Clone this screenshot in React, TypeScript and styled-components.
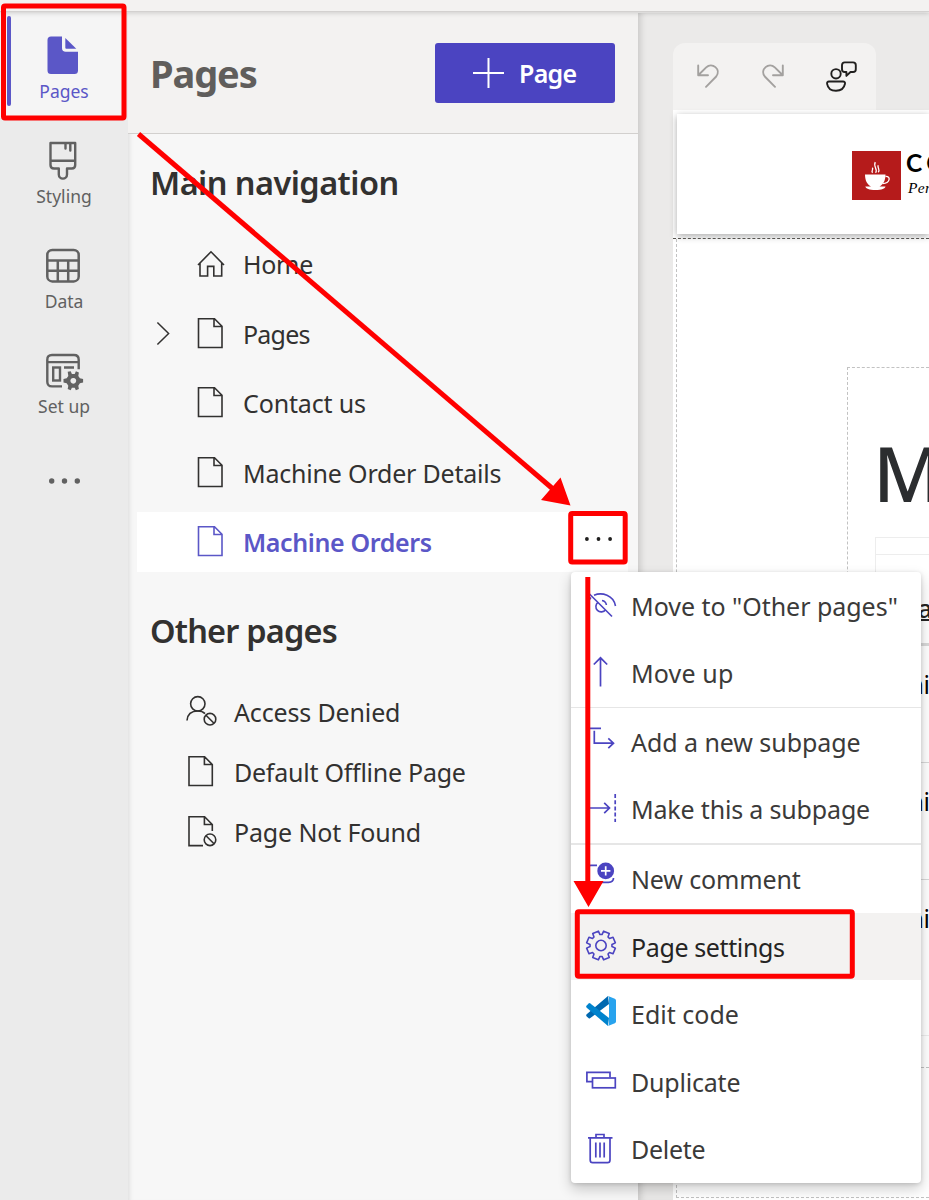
import React from 'react';
import styled, { createGlobalStyle, css } from 'styled-components';

const Global = createGlobalStyle`
  * { box-sizing: border-box; }
  body { margin: 0; overflow: hidden; font-family: "Noto Sans", "Open Sans", sans-serif; color: #323130; }
  svg { display: block; flex: none; overflow: visible; }
`;

const Screen = styled.div`
  position: relative; width: 929px; height: 1200px; overflow: hidden;
  display: flex; flex-direction: column; background: #f3f2f1;
`;
const TopBar = styled.div`
  height: 12px; margin-bottom: 1px; flex: none; background: #f3f2f1; border-bottom: 1px solid #d3d1d0;
  box-shadow: 0 1px 5px rgba(0,0,0,.16); position: relative; z-index: 1;
`;
const Body = styled.div`
  flex: 1; min-height: 0; display: grid; grid-template-columns: 128px 510px 291px;
`;

const Rail = styled.nav`
  background: #ebebeb; display: flex; flex-direction: column; align-items: stretch;
`;
const RailItem = styled.div<{ $active?: boolean }>`
  height: 105px; display: flex; flex-direction: column; align-items: center; gap: 4px;
  padding-top: 22px; font-size: 17.5px; line-height: 24px; color: #616161;
  ${p => p.$active && css`
    background: #f5f5f5; color: #5b57c7; margin-right: 2px; padding-left: 2px;
  `}
`;
const RailIcon = styled.div`
  height: 40px; display: flex; align-items: center; justify-content: center; margin-right: 3px;
`;
const RailMore = styled.div`
  display: flex; justify-content: center; padding-top: 44px; color: #616161;
`;
const RailLabel = styled.span<{ $w: number }>`
  display: flex; justify-content: center; width: ${p => p.$w}px; white-space: nowrap;
`;
const ActiveMark = styled.div`
  position: absolute; left: 7px; top: 16px; width: 4px; height: 90px; border-radius: 2px; background: #5b57c7;
`;

const Panel = styled.section`
  background: #f7f7f7; box-shadow: inset 5px 0 5px -4px rgba(0,0,0,.12);
  display: flex; flex-direction: column;
`;
const PanelHeader = styled.header`
  height: 121px; background: #f3f2f1; border-bottom: 1px solid #d2d0ce; flex: none;
  display: flex; justify-content: space-between; align-items: flex-start; padding: 30px 23px 0 22px;
`;
const PanelTitle = styled.h1`
  margin: 2px 0 0; font-size: 38px; line-height: 56px; font-weight: 700; color: #605e5c; letter-spacing: -1.1px;
`;
const AddButton = styled.button`
  width: 180px; height: 60px; border: 0; border-radius: 3px; background: #4b44c1; color: #fff;
  font: 600 25px/60px "Noto Sans", sans-serif; letter-spacing: -.7px;
  display: flex; align-items: center; gap: 15px; padding: 0 0 0 38px;
`;
const AddLabel = styled.span`padding-bottom: 1px;`;
const SectionTitle = styled.h2<{ $top: number; $ls: number }>`
  margin: ${p => p.$top}px 0 0 22px; height: 50px; font-size: 32.5px; line-height: 50px; font-weight: 600;
  letter-spacing: ${p => p.$ls}px; white-space: nowrap;
`;
const NavList = styled.div`
  margin: 26px 10px 0 9px; display: flex; flex-direction: column; gap: 9.5px;
`;
const NavRow = styled.div<{ $selected?: boolean }>`
  height: 60px; display: grid; grid-template-columns: 60px 46px 1fr 60px; align-items: center;
  font-size: 25px; line-height: 60px; white-space: nowrap;
  ${p => p.$selected && css`background: #fff; color: #5b57c7; font-weight: 600;`}
`;
const ChevronCell = styled.div`display: flex; padding-left: 19px;`;
const MoreCell = styled.div`display: flex; justify-content: center; color: #201f1e; padding-bottom: 6px;`;
const OtherList = styled.div`
  margin: 26px 0 0 58px; display: flex; flex-direction: column;
`;
const OtherRow = styled.div`
  height: 60px; display: grid; grid-template-columns: 48px 1fr; align-items: center; font-size: 25px;
  line-height: 60px; white-space: nowrap;
`;
const Text = styled.span<{ $ls?: number }>`letter-spacing: ${p => p.$ls || 0}px;`;

const Canvas = styled.main`
  background: #ebeae9; box-shadow: inset 6px 0 7px -4px rgba(0,0,0,.16);
  padding: 30px 0 0 35px; display: flex; flex-direction: column; overflow: hidden;
`;
const Tools = styled.div`
  width: 203px; height: 67px; flex: none; background: #f3f2f1; border-radius: 12px 12px 0 0;
  display: flex; align-items: center; padding: 0 19px 1px 24px; justify-content: space-between; color: #a3a19f;
`;
const Site = styled.div`flex: 1; background: #fff; padding: 4px 0 0 0; display: flex; flex-direction: column; min-height: 0;`;
const SiteHeader = styled.div`
  height: 120px; margin-left: 4px; flex: none; background: #fff; box-shadow: 0 2px 7px rgba(0,0,0,.34);
  padding: 37px 0 0 175px; display: flex; gap: 5px; white-space: nowrap;
`;
const Logo = styled.div`
  width: 49px; height: 49px; background: #b51b1b; flex: none; display: flex; align-items: center; justify-content: center;
`;
const Brand = styled.div`
  color: #000; font: 700 24.5px/23px Lato, sans-serif; letter-spacing: 4.5px;
`;
const Tagline = styled.div`
  font: italic 400 15.5px/28px "Liberation Serif", serif; letter-spacing: .3px; padding-left: 2px;
`;
const Divider = styled.div`height: 5px; border-bottom: 1px dashed #55534f; flex: none; position: relative;`;
const SiteBody = styled.div`
  margin-left: 3px; height: 959px; flex: none; border: 1px dashed #c2c2c2; border-width: 0 0 1px 1px;
  padding: 128px 0 0 170px;
`;
const Block = styled.div`
  height: 701px; border: 1px dashed #c2c2c2; border-right: 0; padding: 59px 0 0 27px; overflow: hidden;
`;
const Heading = styled.div`
  margin-left: -2px; font-size: 76px; line-height: 92px; height: 110px; font-weight: 500; color: #2b2d2f; white-space: nowrap;
`;
const Table = styled.div`
  border: 1px solid #ededed; border-right: 0; height: 499px; font-size: 25px; color: #000; white-space: nowrap;
`;
const TableTop = styled.div`height: 17px; border-bottom: 1px solid #ededed;`;
const TableHead = styled.div`
  height: 91px; border-bottom: 3px solid #d9d9d9; padding: 36px 0 0 19px; line-height: 34px;
`;
const HeadText = styled.span`
  display: inline-block; color: #252423; height: 30px; border-bottom: 2px solid #252423; font-weight: 500;
`;
const TableRow = styled.div`
  height: 117px; border-bottom: 1px solid #d9d9d9; padding: 19px 0 0 17px; line-height: 38px; letter-spacing: -.4px;
  &:last-child { height: 156px; border-color: #ededed; }
`;

const Menu = styled.div`
  position: absolute; left: 571px; top: 572px; width: 350px; height: 611px; background: #fff; border-radius: 4px;
  box-shadow: 0 6px 14px rgba(0,0,0,.2), 0 1px 4px rgba(0,0,0,.14); z-index: 2;
`;
const MenuItem = styled.div<{ $hover?: boolean }>`
  height: 67.55px; display: grid; grid-template-columns: 60px 1fr; align-items: center; font-size: 25px;
  line-height: 65px; color: ${p => (p.$hover ? '#252423' : '#3b3a39')}; white-space: nowrap;
  background: ${p => (p.$hover ? '#f3f2f1' : 'transparent')};
`;
const MenuText = styled(Text)`padding-top: 1px;`;
const MenuIcon = styled.div`display: flex; justify-content: center; padding: 0 1px 3px 0; color: #4b44c1;`;
const MenuLine = styled.div<{ $h: number }>`height: ${p => p.$h}px; background: #e6e6e6;`;

const Annotations = styled.svg`position: absolute; left: 0; top: 0; z-index: 3; pointer-events: none;`;

const line = { fill: 'none', stroke: 'currentColor' } as const;

const FileIcon = () => (
  <svg width="26" height="32" viewBox="0 0 26 32" {...line} strokeWidth="1.6">
    <path d="M1.5 .8H17.5L25 8.3V29.5H1.5ZM17 1V8.5H24.8" />
  </svg>
);
const HomeIcon = () => (
  <svg width="28" height="28" viewBox="0 0 28 28" {...line} strokeWidth="1.6">
    <path d="M1 15L14 1.8L27 15M3 13.2V26H10.6V16.4H16.8V26H24.7V13.2" />
  </svg>
);
const Chevron = () => (
  <svg width="14" height="24" viewBox="0 0 14 24" {...line} strokeWidth="1.5"><path d="M1.4 .5L12.6 11.5L1.4 22.5" /></svg>
);
const Dots = ({ w, r }: { w: number; r: number }) => (
  <svg width={w} height="8" viewBox={`0 0 ${w} 8`} fill="currentColor">
    <circle cx={r} cy="4" r={r} /><circle cx={w / 2} cy="4" r={r} /><circle cx={w - r} cy="4" r={r} />
  </svg>
);
const Blocked = ({ x, y }: { x: number; y: number }) => (
  <g transform={`translate(${x} ${y})`}><circle r="5.8" /><path d="M-4-4L4 4" /></g>
);
const UserBlocked = () => (
  <svg width="31" height="32" viewBox="0 0 31 32" {...line} strokeWidth="1.6">
    <circle cx="11.8" cy="7.8" r="7.2" /><path d="M1 24.5C1.5 17.5 6 15 11.8 15C15 15 17.4 16 19 17.6" /><Blocked x={24} y={23.2} />
  </svg>
);
const OfflineFile = () => (
  <svg width="31" height="32" viewBox="0 0 31 32" {...line} strokeWidth="1.6"><path d="M3 .8H18.6L26.3 8.5V29.5H3ZM18.4 1V8.5H26" /></svg>
);
const FileBlocked = () => (
  <svg width="31" height="32" viewBox="0 0 31 32" {...line} strokeWidth="1.6">
    <path d="M17 29.6H3V.8H18.6L26.3 8.5V15M18.4 1V8.5H26" /><Blocked x={24} y={23.8} />
  </svg>
);

const PagesSolid = () => (
  <svg width="32" height="38" viewBox="0 0 32 38" fill="currentColor">
    <path d="M4 .5H15V12Q15 15.8 18.8 15.8H31V34.5Q31 38 27.5 38H4Q.5 38 .5 34.5V4Q.5 .5 4 .5Z" />
    <path d="M18.3 2.1L29.3 12.8H19.3Q18.3 12.8 18.3 11.8Z" />
  </svg>
);
const BrushIcon = () => (
  <svg width="28" height="38" viewBox="0 0 28 38" {...line} strokeWidth="2.4" strokeLinejoin="round" strokeLinecap="round">
    <path d="M1.5 2H26.2V24Q26.2 27.5 22.8 27.5H18V33.5A4.1 4.1 0 0 1 9.8 33.5V27.5H5Q1.5 27.5 1.5 24ZM1.5 19.8H26.2M16.5 2.5V7.5M21.3 2.5V9.5" />
  </svg>
);
const TableIcon = () => (
  <svg width="34" height="34" viewBox="0 -.7 34 34" {...line} strokeWidth="2.5">
    <rect x="1.3" y="1.3" width="31.4" height="31.4" rx="5" /><path d="M1.3 11.8H32.7M1.3 22H32.7M11.8 11.8V32.7M22.2 11.8V32.7" />
  </svg>
);
const SetupIcon = () => (
  <svg width="34" height="34" viewBox="0 -.7 34 34" {...line} strokeWidth="2.4">
    <path d="M16 32.7H6Q1.3 32.7 1.3 28V6Q1.3 1.3 6 1.3H28Q32.7 1.3 32.7 6V15.5M1.3 8.4H32.7M18 13.8H28" />
    <rect x="7.2" y="13.8" width="6.8" height="13" />
    <g transform="translate(27.3 27.2)" stroke="none" fill="currentColor">
      <path fillRule="evenodd" d="M-5.6-9.2L-2.6-9.6L-1.4-7H1.4L2.6-9.6L5.6-8.4L5-5L6.6-2.6L9.8-1.8V1.6L6.6 2.4L5 4.8L5.6 8L2.6 9.4L1.4 6.8H-1.4L-2.6 9.4L-5.6 8L-5 4.8L-6.6 2.4L-9.8 1.6V-1.8L-6.6-2.6L-5-5ZM0-3A2.9 2.9 0 1 0 .01-3Z" />
    </g>
  </svg>
);

const Undo = () => (
  <svg width="22" height="24" viewBox="0 0 22 24" {...line} strokeWidth="1.9" strokeLinecap="round" strokeLinejoin="round">
    <path d="M1.2 1.5V11.3H11M1.2 11.3L9.2 3.4C15-2.3 24.6 5.3 19.2 12.5L9 22.8" />
  </svg>
);
const Redo = () => (
  <svg width="22" height="24" viewBox="0 0 22 24" {...line} strokeWidth="1.9" strokeLinecap="round" strokeLinejoin="round">
    <path d="M20.8 1.5V11.3H11M20.8 11.3L12.8 3.4C7-2.3-2.6 5.3 2.8 12.5L13 22.8" />
  </svg>
);
const PersonChat = () => (
  <svg width="31" height="31" viewBox="0 0 31 31" fill="none" stroke="#201f1e" strokeWidth="1.9" strokeLinejoin="round">
    <circle cx="10" cy="12.8" r="4.7" />
    <path d="M3 20.5H17Q19.3 20.5 19 22.8C18 27.8 14 29.8 10 29.8S2 27.8 1.1 22.8Q.8 20.5 3 20.5ZM18.7 1.4H27Q29.8 1.4 29.8 4.2V8.2Q29.8 11 27 11H24.5L20.4 14.9V11H18.7Q16 11 16 8.2V4.2Q16 1.4 18.7 1.4Z" />
  </svg>
);
const CupIcon = () => (
  <svg width="26" height="30" viewBox="0 0 26 30">
    <path fill="#fff" d="M1 13.5H21.5C21.5 20 19 23.5 15.5 25.5H21.5C21 27.5 18 29 11.5 29S2 27.5 1.3 25.5H7C3.5 23.5 1 20 1 13.5Z" />
    <g fill="none" stroke="#fff" strokeWidth="1.3"><path d="M21.5 15.5C27 15 26.5 22 18.6 22.7M8.6 11.8C6.5 9.5 10.2 8.5 8.2 6.8M11.5 11.8C14.5 8.8 8.8 5.3 11.3 1.2M14.2 11.3C16.7 9 13 7 14.2 4.2" /></g>
  </svg>
);

const EyeOff = () => (
  <svg width="30" height="30" viewBox="0 0 30 30" {...line} strokeWidth="1.6">
    <path d="M2 3.5L26 27.5M8 6.2C16 3 27.5 6 29.5 17M1 17C1.5 13 3 10.5 5 8.5M12.2 13.2A5.3 5.3 0 1 0 19.6 20.5M16 11.5A5.3 5.3 0 0 1 20.4 16" />
  </svg>
);
const ArrowUp = () => (
  <svg width="30" height="30" viewBox="0 0 30 30" {...line} strokeWidth="1.7"><path d="M14.5 29.5V1M7.8 7.5L14.5 .8L21.2 7.5" /></svg>
);
const SubPageIcon = () => (
  <svg width="30" height="30" viewBox="0 0 30 30" {...line} strokeWidth="1.7"><path d="M1 3.3H15M8.3 5.8V18.2H27.5M22.3 13.4L27.5 18.2L22.3 23.2" /></svg>
);
const IndentIcon = () => (
  <svg width="30" height="30" viewBox="0 0 30 30" {...line} strokeWidth="1.7"><path d="M0 15H23.5M18.2 9.8L23.5 15L18.2 20.2" /><path strokeDasharray="4 2.2" d="M29.2 1V29" /></svg>
);
const CommentIcon = () => (
  <svg width="30" height="30" viewBox="0 0 30 30" {...line} strokeWidth="1.7">
    <path d="M11 3.3H5Q1 3.3 1 7.3V16Q1 20 5 20V26L12 20.3H22.5Q27.5 20.3 27.5 16" />
    <circle cx="19.7" cy="8.9" r="8.4" fill="currentColor" stroke="none" /><path stroke="#fff" d="M15 8.9H24.4M19.7 4.2V13.6" />
  </svg>
);
const gearPath = (() => {
  const pts: string[] = [];
  for (let i = 0; i < 8; i++) {
    const base = (i * Math.PI) / 4 + Math.PI / 8;
    [[-0.3, 11], [-0.21, 14.6], [0.21, 14.6], [0.3, 11]].forEach(([a, r]) =>
      pts.push(`${(15 + r * Math.cos(base + a)).toFixed(2)} ${(15.5 + r * Math.sin(base + a)).toFixed(2)}`));
  }
  return `M${pts.join('L')}Z`;
})();
const GearIcon = () => (
  <svg width="30" height="30" viewBox="0 0 30 30" {...line} strokeWidth="1.6" strokeLinejoin="round"><path d={gearPath} /><circle cx="15" cy="15.5" r="5.2" /></svg>
);
const CodeIcon = () => (
  <svg width="30" height="30" viewBox="0 0 30 30">
    <g transform="translate(0 -2)">
      <path fill="#0068b0" d="M22 0L23 8L4 22.3Q3.4 22.8 2.7 22.2L.7 20.4Q-.4 19.3 .7 18.2Z" />
      <path fill="#0083cd" d="M4 7.2L23 22L22 30L.7 11.7Q-.4 10.6 .7 9.4L2.7 7.5Q3.4 6.9 4 7.2Z" />
      <path fill="#28a3ee" d="M22 0L28.8 2.7Q30 3.3 30 4.5V25.5Q30 26.7 28.8 27.3L22 30Q23 29 23 27.5V2.5Q23 1 22 0Z" />
    </g>
  </svg>
);
const DuplicateIcon = () => (
  <svg width="30" height="30" viewBox="0 0 30 30" {...line} strokeWidth="1.7"><path d="M6 16.7H.9V7.3H24V12.5" /><rect x="6.5" y="13" width="22.8" height="9.8" /></svg>
);
const TrashIcon = () => (
  <svg width="30" height="30" viewBox="0 0 30 30" {...line} strokeWidth="1.7">
    <path d="M2 4.8H26.5M10 4.5V1.5H18V4.5M4.2 5V27Q4.2 29.7 6.7 29.7H21.5Q24 29.7 24 27V5M9.8 9.5V24.5M14 9.5V24.5M18.2 9.5V24.5" />
  </svg>
);

const railItems = [
  { label: 'Pages', w: 49, icon: <PagesSolid />, active: true },
  { label: 'Styling', w: 56, icon: <BrushIcon /> },
  { label: 'Data', w: 39, icon: <TableIcon /> },
  { label: 'Set up', w: 54, icon: <SetupIcon /> },
];
const navItems = [
  { label: 'Home', icon: <HomeIcon />, ls: -0.3 },
  { label: 'Pages', icon: <FileIcon />, expandable: true, ls: -0.8 },
  { label: 'Contact us', icon: <FileIcon />, ls: -0.15 },
  { label: 'Machine Order Details', icon: <FileIcon />, ls: -0.2 },
  { label: 'Machine Orders', icon: <FileIcon />, selected: true, ls: -0.38 },
];
const otherItems = [
  { label: 'Access Denied', icon: <UserBlocked />, ls: -0.15 },
  { label: 'Default Offline Page', icon: <OfflineFile />, ls: -0.25 },
  { label: 'Page Not Found', icon: <FileBlocked />, ls: -0.15 },
];
const menuItems: { label: string; icon: React.ReactNode; ls: number; line?: number; hover?: boolean }[] = [
  { label: 'Move to "Other pages"', icon: <EyeOff />, ls: -0.03 },
  { label: 'Move up', icon: <ArrowUp />, line: 1, ls: 0.15 },
  { label: 'Add a new subpage', icon: <SubPageIcon />, ls: -0.06 },
  { label: 'Make this a subpage', icon: <IndentIcon />, line: 2, ls: -0.17 },
  { label: 'New comment', icon: <CommentIcon />, ls: -0.15 },
  { label: 'Page settings', icon: <GearIcon />, hover: true, ls: -0.38 },
  { label: 'Edit code', icon: <CodeIcon />, ls: 0 },
  { label: 'Duplicate', icon: <DuplicateIcon />, ls: -0.2 },
  { label: 'Delete', icon: <TrashIcon />, ls: -0.3 },
];

export default function App() {
  return (
    <Screen>
      <Global />
      <TopBar />
      <Body>
        <Rail>
          {railItems.map(r => (
            <RailItem key={r.label} $active={r.active}>
              {r.active && <ActiveMark />}
              <RailIcon>{r.icon}</RailIcon>
              <RailLabel $w={r.w}>{r.label}</RailLabel>
            </RailItem>
          ))}
          <RailMore><Dots w={31} r={2.7} /></RailMore>
        </Rail>
        <Panel>
          <PanelHeader>
            <PanelTitle>Pages</PanelTitle>
            <AddButton>
              <svg width="31" height="31" stroke="#fff" strokeWidth="2"><path d="M0 15H31M15.5 0V30" /></svg>
              <AddLabel>Page</AddLabel>
            </AddButton>
          </PanelHeader>
          <SectionTitle $top={24} $ls={-0.55}>Main navigation</SectionTitle>
          <NavList>
            {navItems.map(n => (
              <NavRow key={n.label} $selected={n.selected}>
                <ChevronCell>{n.expandable && <Chevron />}</ChevronCell>
                {n.icon}
                <Text $ls={n.ls}>{n.label}</Text>
                <MoreCell>{n.selected && <Dots w={27} r={1.9} />}</MoreCell>
              </NavRow>
            ))}
          </NavList>
          <SectionTitle $top={34} $ls={-0.8}>Other pages</SectionTitle>
          <OtherList>
            {otherItems.map(o => <OtherRow key={o.label}>{o.icon}<Text $ls={o.ls}>{o.label}</Text></OtherRow>)}
          </OtherList>
        </Panel>
        <Canvas>
          <Tools><Undo /><Redo /><PersonChat /></Tools>
          <Site>
            <SiteHeader>
              <Logo><CupIcon /></Logo>
              <Brand>CONTOSO<Tagline>Perfect coffee</Tagline></Brand>
            </SiteHeader>
            <Divider />
            <SiteBody>
              <Block>
                <Heading>Machine Orders</Heading>
                <Table>
                  <TableTop />
                  <TableHead><HeadText>Machine</HeadText></TableHead>
                  <TableRow>Chi</TableRow>
                  <TableRow>Chi</TableRow>
                  <TableRow>Chi</TableRow>
                </Table>
              </Block>
            </SiteBody>
          </Site>
        </Canvas>
      </Body>
      <Menu>
        {menuItems.map(m => (
          <React.Fragment key={m.label}>
            <MenuItem $hover={m.hover}><MenuIcon>{m.icon}</MenuIcon><MenuText $ls={m.ls}>{m.label}</MenuText></MenuItem>
            {m.line && <MenuLine $h={m.line} />}
          </React.Fragment>
        ))}
      </Menu>
      <Annotations width="929" height="1200" fill="none" stroke="#f00" strokeWidth="5">
        <rect x="3.5" y="6" width="120.5" height="112" rx="1.5" />
        <rect x="570.7" y="513.5" width="54.5" height="48.5" rx="1.5" />
        <rect x="577.3" y="911.8" width="275" height="64.5" rx="1.5" />
        <path d="M138.5 134L553 489" />
        <path d="M587.8 577V884" />
        <path d="M570.5 505.5L541 500L560.5 477.5ZM588.5 907L573.5 881H603.5Z" fill="#f00" stroke="none" />
      </Annotations>
    </Screen>
  );
}
